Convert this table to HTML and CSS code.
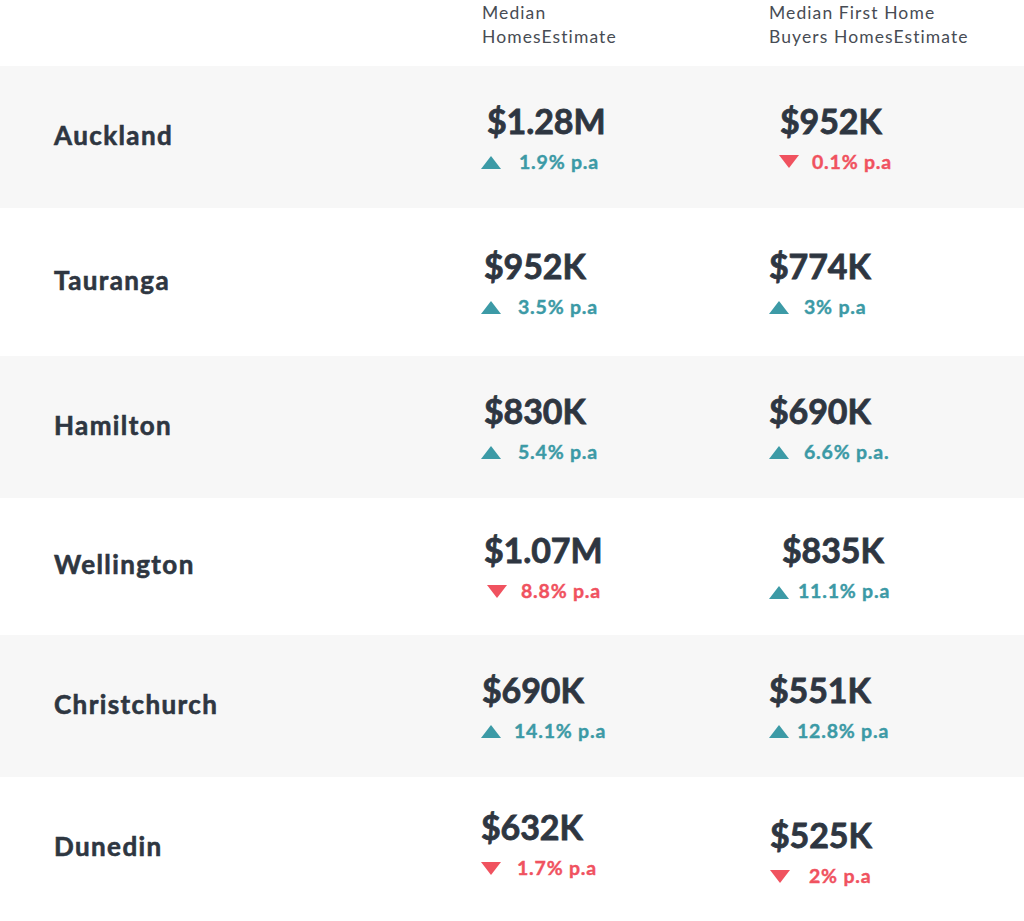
FILE: index.html
```html
<!DOCTYPE html>
<html lang="en">
<head>
<meta charset="utf-8">
<title>Median Home Estimates</title>
<link rel="stylesheet" href="styles.css">
</head>
<body>
<div class="table">
  <div class="head">
    <div></div>
    <div class="head-cell">Median<br>HomesEstimate</div>
    <div class="head-cell">Median First Home<br>Buyers HomesEstimate</div>
  </div>

  <div class="row shade">
    <div class="city">Auckland</div>
    <div class="cell">
      <div class="value ml-6">$1.28M</div>
      <div class="change up"><svg class="tri" viewBox="0 0 20 13"><polygon points="0,13 10,0 20,13"/></svg><span class="g18">1.9% p.a</span></div>
    </div>
    <div class="cell">
      <div class="value ml-12">$952K</div>
      <div class="change down ml-11"><svg class="tri" viewBox="0 0 20 13"><polygon points="0,0 20,0 10,13"/></svg><span class="g13">0.1% p.a</span></div>
    </div>
  </div>

  <div class="row tall">
    <div class="city">Tauranga</div>
    <div class="cell">
      <div class="value ml-3">$952K</div>
      <div class="change up"><svg class="tri" viewBox="0 0 20 13"><polygon points="0,13 10,0 20,13"/></svg><span class="g17">3.5% p.a</span></div>
    </div>
    <div class="cell">
      <div class="value ml-1">$774K</div>
      <div class="change up ml-1"><svg class="tri" viewBox="0 0 20 13"><polygon points="0,13 10,0 20,13"/></svg><span class="g15">3% p.a</span></div>
    </div>
  </div>

  <div class="row shade">
    <div class="city">Hamilton</div>
    <div class="cell">
      <div class="value ml-3">$830K</div>
      <div class="change up"><svg class="tri" viewBox="0 0 20 13"><polygon points="0,13 10,0 20,13"/></svg><span class="g17">5.4% p.a</span></div>
    </div>
    <div class="cell">
      <div class="value ml-1">$690K</div>
      <div class="change up ml-1"><svg class="tri" viewBox="0 0 20 13"><polygon points="0,13 10,0 20,13"/></svg><span class="g15">6.6% p.a.</span></div>
    </div>
  </div>

  <div class="row short">
    <div class="city">Wellington</div>
    <div class="cell">
      <div class="value ml-3">$1.07M</div>
      <div class="change down ml-6"><svg class="tri" viewBox="0 0 20 13"><polygon points="0,0 20,0 10,13"/></svg><span class="g14">8.8% p.a</span></div>
    </div>
    <div class="cell">
      <div class="value ml-14">$835K</div>
      <div class="change up ml-1"><svg class="tri" viewBox="0 0 20 13"><polygon points="0,13 10,0 20,13"/></svg><span class="g9">11.1% p.a</span></div>
    </div>
  </div>

  <div class="row shade">
    <div class="city">Christchurch</div>
    <div class="cell">
      <div class="value ml-1">$690K</div>
      <div class="change up"><svg class="tri" viewBox="0 0 20 13"><polygon points="0,13 10,0 20,13"/></svg><span class="g13">14.1% p.a</span></div>
    </div>
    <div class="cell">
      <div class="value ml-1">$551K</div>
      <div class="change up ml-1"><svg class="tri" viewBox="0 0 20 13"><polygon points="0,13 10,0 20,13"/></svg><span class="g8">12.8% p.a</span></div>
    </div>
  </div>

  <div class="row last">
    <div class="city">Dunedin</div>
    <div class="cell raise">
      <div class="value">$632K</div>
      <div class="change down"><svg class="tri" viewBox="0 0 20 13"><polygon points="0,0 20,0 10,13"/></svg><span class="g16">1.7% p.a</span></div>
    </div>
    <div class="cell">
      <div class="value ml-2">$525K</div>
      <div class="change down ml-2"><svg class="tri" viewBox="0 0 20 13"><polygon points="0,0 20,0 10,13"/></svg><span class="g19">2% p.a</span></div>
    </div>
  </div>
</div>
</body>
</html>
```

FILE: styles.css
```css
html, body {
  margin: 0;
  padding: 0;
  background: #ffffff;
}

body {
  font-family: Lato, "Open Sans", "Liberation Sans", sans-serif;
  color: #2e3641;
  width: 1024px;
  height: 921px;
  overflow: hidden;
}

.table {
  display: flex;
  flex-direction: column;
}

.head,
.row {
  display: grid;
  grid-template-columns: 481px 287px 1fr;
}

.head {
  height: 66px;
  align-items: start;
}

.head-cell {
  font-size: 17.5px;
  line-height: 23.5px;
  font-weight: 400;
  color: #474c54;
  padding-top: 1px;
  padding-left: 1px;
  letter-spacing: 1.1px;
}

.row {
  height: 142px;
  align-items: center;
}

.row.tall { height: 148px; }
.row.short { height: 137px; }
.row.last { height: 143px; }

.shade {
  background: #f7f7f7;
}

.city {
  padding-left: 54px;
  font-size: 26px;
  font-weight: 700;
  letter-spacing: 1.4px;
  line-height: 30px;
  margin-top: -5px;
  -webkit-text-stroke: 0.6px #2e3641;
}

.cell {
  display: flex;
  flex-direction: column;
  align-items: flex-start;
}

.cell.raise {
  margin-top: -10px;
}

.row.last .cell + .cell {
  margin-top: 6px;
}

.value {
  font-size: 34px;
  line-height: 40px;
  font-weight: 700;
  letter-spacing: -0.1px;
  -webkit-text-stroke: 0.8px #2e3641;
}

.change {
  display: flex;
  align-items: center;
  margin-top: 9px;
  font-size: 19.5px;
  line-height: 24px;
  font-weight: 700;
  letter-spacing: 0.8px;
}

.change.up { color: #3c9aa6; fill: #3c9aa6; -webkit-text-stroke: 0.4px #3c9aa6; }
.change.down { color: #f0525f; fill: #f0525f; -webkit-text-stroke: 0.4px #f0525f; }

.tri {
  width: 20px;
  height: 13px;
  flex: none;
}

.change.up .tri { margin-top: 2px; }

.ml-1 { margin-left: 1px; }
.ml-2 { margin-left: 2px; }
.ml-3 { margin-left: 3px; }
.ml-6 { margin-left: 6px; }
.ml-11 { margin-left: 11px; }
.ml-12 { margin-left: 12px; }
.ml-14 { margin-left: 14px; }

.g8 { margin-left: 8px; }
.g9 { margin-left: 9px; }
.g13 { margin-left: 13px; }
.g14 { margin-left: 14px; }
.g15 { margin-left: 15px; }
.g16 { margin-left: 16px; }
.g17 { margin-left: 17px; }
.g18 { margin-left: 18px; }
.g19 { margin-left: 19px; }
```
